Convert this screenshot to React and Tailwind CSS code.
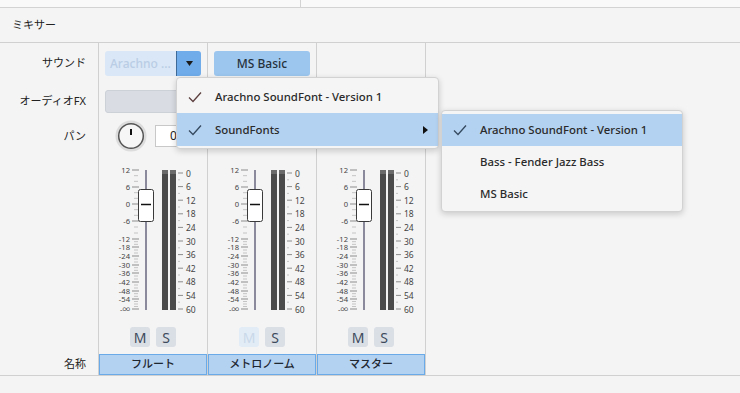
import React from "react";

const leftMarks = [
  ["12", 16], ["6", 33], ["0", 50], ["-6", 67], ["-12", 85], ["-18", 93], ["-24", 102],
  ["-30", 111], ["-36", 119], ["-42", 128], ["-48", 137], ["-54", 145], ["-∞", 155],
];

const rightMarks = ["0", "6", "12", "18", "24", "30", "36", "42", "48", "54", "60"];

function Fader() {
  const minors = [];
  for (let i = 0; i < leftMarks.length - 1; i++) {
    const a = leftMarks[i][1];
    const b = leftMarks[i + 1][1];
    const n = i === leftMarks.length - 2 ? 3 : 2;
    for (let k = 1; k <= n; k++) minors.push(a + ((b - a) * k) / (n + 1));
  }
  return (
    <svg width="108" height="166" className="block">
      {minors.map((y, i) => (
        <line key={"m" + i} x1="35" x2="39" y1={y} y2={y} stroke="#c4c4c4" strokeWidth="1" />
      ))}
      {leftMarks.map(([t, y]) => (
        <g key={t}>
          <line x1="33" x2="40" y1={y} y2={y} stroke="#8c8c8c" strokeWidth="1" />
          <text x="31" y={y} textAnchor="end" dominantBaseline="central" fontSize="7.6" fill="#444">
            {t}
          </text>
        </g>
      ))}
      <rect x="46" y="16" width="2" height="140" fill="#8a8a9c" />
      <rect x="39.5" y="35.5" width="15" height="32" rx="2" fill="#ffffff" stroke="#3a3a3a" />
      <line x1="42" x2="52" y1="50.5" y2="50.5" stroke="#111" strokeWidth="1.5" />
      <rect x="63" y="16" width="6" height="140" fill="#4b4b4b" />
      <rect x="71" y="16" width="6" height="140" fill="#4b4b4b" />
      <rect x="63" y="16" width="6" height="4" fill="#6a6a6a" />
      <rect x="71" y="16" width="6" height="4" fill="#6a6a6a" />
      {rightMarks.map((t, i) => {
        const y = 19 + i * 13.6;
        return (
          <g key={t}>
            <line x1="79" x2="84" y1={y} y2={y} stroke="#8c8c8c" strokeWidth="1" />
            {i < 10 && (
              <line x1="79" x2="81" y1={y + 6.8} y2={y + 6.8} stroke="#c4c4c4" strokeWidth="1" />
            )}
            <text x="87" y={y} dominantBaseline="central" fontSize="8.5" fill="#444">
              {t}
            </text>
          </g>
        );
      })}
    </svg>
  );
}

function Knob() {
  return (
    <svg width="32" height="32" className="block shrink-0">
      <circle cx="16" cy="16" r="15.5" fill="#dcdcdc" />
      <circle cx="16" cy="16" r="12.3" fill="#f6f6f6" stroke="#555" strokeWidth="1.5" />
      <line x1="16" x2="16" y1="9" y2="15" stroke="#111" strokeWidth="2" />
    </svg>
  );
}

function Check({ color }) {
  return (
    <svg width="14" height="12" viewBox="0 0 14 12" className="shrink-0">
      <polyline points="1,6.5 5,10.5 13,1.5" fill="none" stroke={color} strokeWidth="1.3" />
    </svg>
  );
}

function Strip({ name, sound, pan, muteOff }) {
  return (
    <div className="w-[109px] border-r border-[#d0d0d0] flex flex-col">
      <div className="h-[41px] flex items-center px-[6px]">
        {sound === "dropdown" && (
          <div className="h-[25px] w-full flex rounded-[3px] bg-[#dae7f6] overflow-hidden">
            <div className="flex-1 flex items-center pl-[5px] text-[12px] text-[#b9cde5] font-medium">
              Arachno ...
            </div>
            <div className="w-[25px] bg-[#70acea] border-l border-[#3f6a98] flex items-center justify-center">
              <svg width="7" height="5" viewBox="0 0 7 5">
                <polygon points="0,0 7,0 3.5,5" fill="#1b1b1b" />
              </svg>
            </div>
          </div>
        )}
        {sound === "basic" && (
          <div className="h-[25px] w-full rounded-[3px] bg-[#9cc6ee] flex items-center justify-center text-[12px] font-medium text-[#26313c]">
            MS Basic
          </div>
        )}
      </div>
      <div className="h-[34px] flex items-center px-[6px]">
        <div className="h-[23px] w-full rounded-[3px] bg-[#d9dde3] border border-[#ccd0d7]" />
      </div>
      <div className="h-[36px] flex items-center pl-[16px]">
        {pan && (
          <>
            <Knob />
            <div className="ml-[8px] h-[22px] w-[42px] bg-white border border-[#c8c8c8] flex items-center pl-[14px] text-[12px] text-[#222]">
              0
            </div>
          </>
        )}
      </div>
      <div className="h-[166px]">
        <Fader />
      </div>
      <div className="h-[34px] flex items-center justify-center gap-[6px]">
        <div
          className={
            muteOff
              ? "w-[20px] h-[20px] rounded-[3px] bg-[#e2ecf7] text-[#c9d8e9] flex items-center justify-center text-[14px]"
              : "w-[20px] h-[20px] rounded-[3px] bg-[#dadfe5] text-[#3c4a5c] flex items-center justify-center text-[14px]"
          }
        >
          M
        </div>
        <div className="w-[20px] h-[20px] rounded-[3px] bg-[#dadfe5] text-[#3c4a5c] flex items-center justify-center text-[14px]">
          S
        </div>
      </div>
      <div className="h-[21px] border border-[#6aaae8] bg-[#b3d1f0] flex items-center justify-center text-[11px] font-medium text-[#1e2630]">
        {name}
      </div>
    </div>
  );
}

export default function App() {
  return (
    <div className="w-[740px] h-[393px] bg-[#f4f4f4] flex flex-col relative overflow-hidden font-['Noto_Sans','Noto_Sans_CJK_JP',sans-serif] text-[#222]">
      <div className="h-[8px] border-b border-[#d3d3d3] bg-[#f9f9f9] flex">
        <div className="w-[301px] border-r border-[#d3d3d3]" />
      </div>
      <div className="h-[35px] border-b border-[#d0d0d0] flex items-center pl-[12px] text-[11px]">
        ミキサー
      </div>
      <div className="h-[333px] border-b border-[#d0d0d0] flex">
        <div className="w-[99px] border-r border-[#d0d0d0] flex flex-col items-end pr-[12px] text-[11px]">
          <div className="h-[41px] flex items-center">サウンド</div>
          <div className="h-[34px] flex items-center">オーディオFX</div>
          <div className="h-[36px] flex items-center">パン</div>
          <div className="h-[166px]" />
          <div className="h-[34px]" />
          <div className="h-[21px] flex items-center">名称</div>
        </div>
        <Strip name="フルート" sound="dropdown" pan />
        <Strip name="メトロノーム" sound="basic" muteOff />
        <Strip name="マスター" sound="none" />
      </div>
      <div className="flex-1" />

      <div className="absolute left-[176px] top-[77px] w-[263px] h-[72px] bg-[#f5f5f5] border border-[#d2d2d2] rounded-[4px] shadow-[0_2px_6px_rgba(0,0,0,0.18)] pt-[2px] text-[11.4px] font-medium text-[#2a2a2a]">
        <div className="h-[33px] flex items-center pl-[11px]">
          <Check color="#5c3e3e" />
          <span className="ml-[13px]">Arachno SoundFont - Version 1</span>
        </div>
        <div className="h-[33px] flex items-center pl-[11px] bg-[#b3d1f0]">
          <Check color="#34495e" />
          <span className="ml-[13px] flex-1">SoundFonts</span>
          <svg width="5" height="8" viewBox="0 0 5 8" className="mr-[10px]">
            <polygon points="0,0 5,4 0,8" fill="#111" />
          </svg>
        </div>
      </div>

      <div className="absolute left-[441px] top-[110px] w-[242px] h-[102px] bg-[#f5f5f5] border border-[#d2d2d2] rounded-[4px] shadow-[0_2px_6px_rgba(0,0,0,0.18)] pt-[3px] text-[11.4px] font-medium text-[#2a2a2a]">
        <div className="h-[32px] flex items-center pl-[11px] bg-[#b3d1f0]">
          <Check color="#34495e" />
          <span className="ml-[13px]">Arachno SoundFont - Version 1</span>
        </div>
        <div className="h-[32px] flex items-center pl-[38px]">Bass - Fender Jazz Bass</div>
        <div className="h-[32px] flex items-center pl-[38px]">MS Basic</div>
      </div>
    </div>
  );
}
